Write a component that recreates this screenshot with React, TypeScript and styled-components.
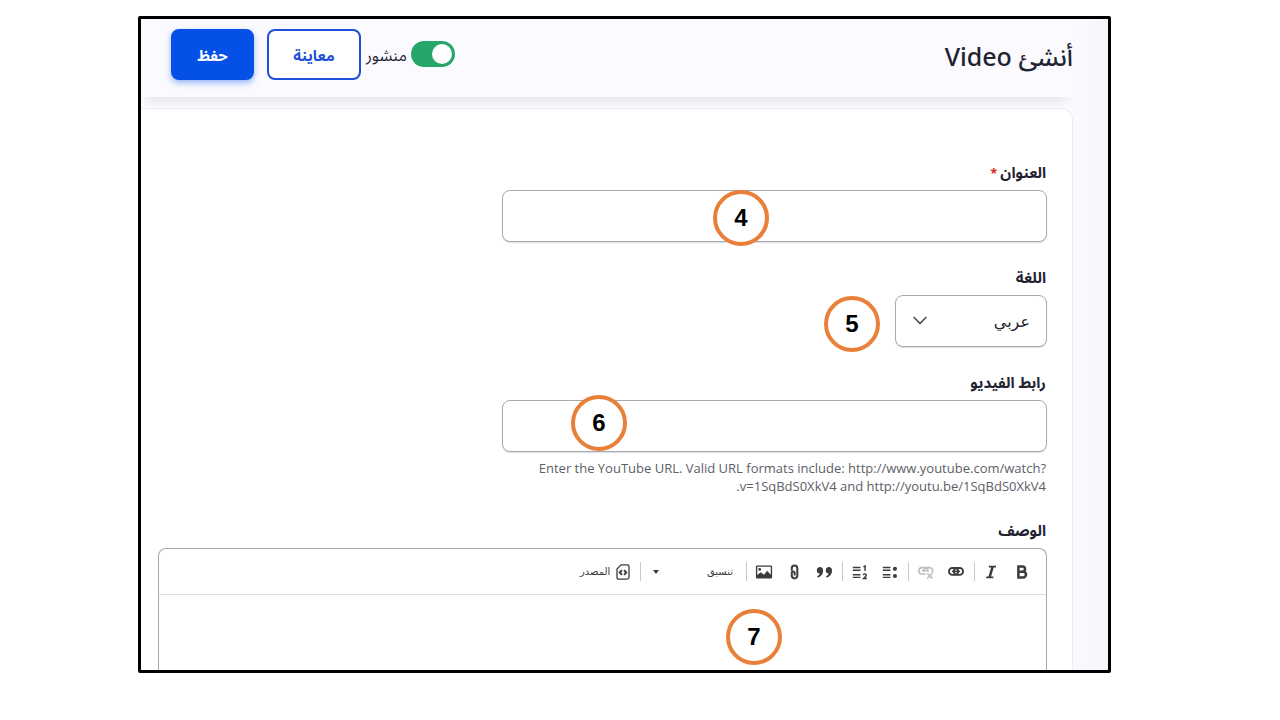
import React from "react";
import styled, { createGlobalStyle, css } from "styled-components";

const GlobalStyle = createGlobalStyle`
  *, *::before, *::after { box-sizing: border-box; }
  body { margin: 0; background: #fff; color: #222330; }
  body, button, input, select, textarea {
    font-family: "Open Sans", "Noto Sans Arabic", sans-serif;
  }
`;

const Page = styled.div`
  padding: 16px 169px 47px 138px;
`;

const Frame = styled.main`
  border: 3px solid #000;
  border-radius: 2px;
  overflow: hidden;
  background: linear-gradient(to left, #f5f5fb, #fafaff 36px);
`;

const Header = styled.header`
  display: flex;
  align-items: center;
  height: 78px;
  margin-right: 35px;
  padding: 0 0 8px 30px;
  box-shadow: 0 10px 10px -6px rgba(34, 35, 48, 0.1);
`;

const Title = styled.h1`
  flex: 1;
  margin: 0;
  padding-top: 4px;
  font-family: "Noto Sans", "Noto Sans Arabic", sans-serif;
  font-size: 25px;
  line-height: 36px;
  font-weight: 500;
`;

const ToggleLabel = styled.label`
  display: flex;
  align-items: center;
  gap: 4px;
  margin-left: 5px;
  font-size: 16px;
`;

const ToggleText = styled.span`
  padding-top: 4px;
`;

const Toggle = styled.input`
  appearance: none;
  position: relative;
  width: 44px;
  height: 26px;
  margin: 0;
  border-radius: 13px;
  background: #26a769;
  &::before {
    content: "";
    position: absolute;
    top: 3px;
    right: 3px;
    width: 20px;
    height: 20px;
    border-radius: 50%;
    background: #fff;
  }
`;

const ActionButton = styled.button<{ $primary?: boolean }>`
  height: 51px;
  min-width: 94px;
  padding: 4px 20px 0;
  border: 2px solid #1d4fd8;
  border-radius: 8px;
  background: #fff;
  color: #1d4fd8;
  font-size: 15px;
  font-weight: 700;
  ${(p) =>
    p.$primary &&
    css`
      min-width: 83px;
      margin-right: 13px;
      border-color: #0550e6;
      background: #0550e6;
      color: #fff;
      box-shadow: 0 3px 6px rgba(5, 80, 230, 0.4);
    `}
`;

const Card = styled.form`
  display: flex;
  flex-direction: column;
  gap: 23px;
  margin: 11px 35px 0 0;
  padding: 51px 25px 0 17px;
  border: 1px solid #ececf2;
  border-width: 1px 1px 0 0;
  border-radius: 0 12px 0 0;
  background: #fff;
  position: relative;
`;

const Field = styled.div`
  display: flex;
  flex-direction: column;
  align-items: flex-start;
`;

const FieldLabel = styled.label`
  margin-bottom: 6px;
  padding-right: 1px;
  font-size: 15px;
  line-height: 24px;
  font-weight: 700;
`;

const Required = styled.span`
  margin-right: 3px;
  color: #dc2323;
  font-size: 13px;
  line-height: 1;
`;

const Control = styled.div<{ $width: string }>`
  position: relative;
  width: ${(p) => p.$width};
  max-width: 100%;
`;

const boxStyle = css`
  display: block;
  width: 100%;
  height: 52px;
  padding: 0 16px;
  border: 1px solid #a9aaaf;
  border-radius: 8px;
  background: #fff;
  color: #222330;
  font-size: 16px;
  box-shadow: 0 1px 1px rgba(34, 35, 48, 0.15);
`;

const TextInput = styled.input`
  ${boxStyle}
`;

const Select = styled.select`
  ${boxStyle}
  appearance: none;
  font-family: "DejaVu Sans", sans-serif;
`;

const Chevron = styled.svg`
  position: absolute;
  left: 18px;
  top: 21px;
  pointer-events: none;
`;

const Help = styled.p`
  width: 545px;
  max-width: 100%;
  margin: 7px 0 0;
  padding-right: 1px;
  color: #5d5e68;
  font-size: 13px;
  line-height: 18px;
`;

const Badge = styled.span<{ $right: number; $top: number }>`
  position: absolute;
  right: ${(p) => p.$right}px;
  top: ${(p) => p.$top}px;
  display: flex;
  align-items: center;
  justify-content: center;
  width: 56px;
  height: 56px;
  border: 4px solid #e8803a;
  border-radius: 50%;
  background: #fff;
  color: #000;
  font: 700 24px "Liberation Sans", sans-serif;
`;

const Editor = styled.div`
  border: 1px solid #a9aaaf;
  border-bottom: 0;
  border-radius: 8px 8px 0 0;
`;

const Toolbar = styled.div`
  display: flex;
  align-items: center;
  height: 46px;
  padding: 0 9px;
  border-bottom: 1px solid #dcdce0;
`;

const ToolButton = styled.button`
  display: flex;
  align-items: center;
  justify-content: center;
  width: 30px;
  height: 30px;
  padding: 0;
  border: 0;
  background: none;
  color: #3c3c3c;
  &:disabled { color: #bdbdbd; }
`;

const WideTool = styled(ToolButton)<{ $width: number; $pad: number }>`
  width: ${(p) => p.$width}px;
  padding: 0 ${(p) => p.$pad}px;
  justify-content: space-between;
  font-family: "DejaVu Sans", sans-serif;
  font-size: 10px;
  white-space: nowrap;
`;

const Separator = styled.span`
  width: 1px;
  height: 19px;
  margin: 0 2px 0 3px;
  background: #c8c8c8;
`;

const EditorBody = styled.textarea`
  display: block;
  width: 100%;
  height: 75px;
  padding: 12px 16px;
  border: 0;
  background: none;
  resize: none;
`;

const ICON = { width: 18, height: 18, viewBox: "0 0 20 20", fill: "currentColor", "aria-hidden": true } as const;

const SMALL_ICON = { ...ICON, width: 16, height: 16 } as const;

const stroke = { fill: "none", stroke: "currentColor" } as const;

const BoldIcon = () => (
  <svg {...ICON}>
    <path {...stroke} strokeWidth="2.8" d="M6 3.900h4.500a2.800 2.800 0 0 1 0 5.700H6zM6 9.600h5.200a3.200 3.200 0 0 1 0 6.500H6z" />
  </svg>
);
const ItalicIcon = () => (
  <svg {...ICON}>
    <path {...stroke} strokeWidth="2" d="M6.500 4h8M3.500 16h8" />
    <path {...stroke} strokeWidth="2.800" d="M10.700 4 7.300 16" />
  </svg>
);
const LinkIcon = () => (
  <svg {...SMALL_ICON}>
    <g {...stroke}>
      <rect x="1.200" y="5" width="11.500" height="8.500" rx="4.200" strokeWidth="2.300" />
      <rect x="7.300" y="5" width="11.500" height="8.500" rx="4.200" strokeWidth="2.300" />
      <path strokeWidth="2" d="M5 9.250h10" />
    </g>
  </svg>
);
const UnlinkIcon = () => (
  <svg {...SMALL_ICON}>
    <g {...stroke} strokeWidth="2">
      <path d="M9.500 12.500H5a4 4 0 0 1 0-8h4a4 4 0 0 1 3.500 2.500" />
      <path d="M7.500 9.500a4 4 0 0 1 3.700-5h3.500a4 4 0 0 1 3 6.300M5 8.500h9" />
      <path d="m11.500 11.500 6.500 6.500m0-6.500L11.500 18" />
    </g>
  </svg>
);
const ListLines = () => (
  <path {...stroke} strokeWidth="1.600" d="M2 5h8.500M2 8h8.500M2 13h8.500M2 16h8.500" />
);
const BulletsIcon = () => (
  <svg {...ICON}>
    <ListLines />
    <circle cx="15.500" cy="6.500" r="2.300" />
    <circle cx="15.500" cy="14.500" r="2.300" />
  </svg>
);
const NumbersIcon = () => (
  <svg {...ICON}>
    <ListLines />
    <path {...stroke} strokeWidth="1.600" d="m13.800 4.300 1.800-1v5.700M13.500 13.500q.3-1.400 1.900-1.400 2.500.6 1 2.600l-2.400 2.500h3.600" />
  </svg>
);
const QuoteIcon = () => (
  <svg {...ICON}>
    <path d="M5 4.500a3.900 3.900 0 0 1 4 4c0 4-2.700 6.800-6.100 7.700l-.5-1.400c1.600-.8 2.700-1.700 2.900-3A3.700 3.700 0 0 1 5 4.500zM14.900 4.500a3.900 3.900 0 0 1 4 4c0 4-2.700 6.800-6.100 7.700l-.5-1.400c1.600-.8 2.700-1.700 2.900-3a3.700 3.700 0 0 1-.3-7.300z" />
  </svg>
);
const ClipIcon = () => (
  <svg {...ICON}>
    <path {...stroke} strokeWidth="2.200" d="M7.500 8.500V6a3 3 0 0 1 6.200 0v8a3 3 0 0 1-6.200 0v-3.500a1.700 1.700 0 0 1 3.200 0V14" />
  </svg>
);
const ImageIcon = () => (
  <svg {...ICON}>
    <path
      fillRule="evenodd"
      d="M2.200 2.800h15.600q1.200 0 1.200 1.200v12q0 1.200-1.200 1.200H2.200Q1 17.200 1 16V4q0-1.200 1.200-1.200zM2.500 4.300v9l4-3 3.500 2.800 3.500-4.600 4 4.500V4.300zM5.200 5.500a1.600 1.600 0 1 1 0 3.200 1.600 1.600 0 0 1 0-3.200z"
    />
  </svg>
);
const SourceIcon = () => (
  <svg width="14" height="16" viewBox="0 0 14 16" aria-hidden="true">
    <path {...stroke} strokeWidth="1.300" d="M5 .9h6.500q1.500 0 1.500 1.500v11.200q0 1.500-1.500 1.500h-9Q1 15.100 1 13.600V5z" />
    <path {...stroke} strokeWidth="2" d="M5.900 6.200 3.800 8.500l2.100 2.300M8.100 6.200l2.100 2.300-2.100 2.300" />
  </svg>
);
const CaretIcon = () => (
  <svg width="6" height="4" viewBox="0 0 6 4" fill="currentColor" aria-hidden="true">
    <path d="M0 0h6L3 4z" />
  </svg>
);

export default function App() {
  return (
    <>
      <GlobalStyle />
      <Page dir="rtl" lang="ar">
        <Frame>
          <Header>
            <Title>أنشئ Video</Title>
            <ToggleLabel>
              <Toggle type="checkbox" defaultChecked />
              <ToggleText>منشور</ToggleText>
            </ToggleLabel>
            <ActionButton type="button">معاينة</ActionButton>
            <ActionButton type="submit" form="video-form" $primary>
              حفظ
            </ActionButton>
          </Header>
          <Card id="video-form" onSubmit={(e) => e.preventDefault()}>
            <Field>
              <FieldLabel htmlFor="title">
                العنوان<Required>*</Required>
              </FieldLabel>
              <Control $width="545px">
                <TextInput id="title" type="text" />
                <Badge $right={278} $top={0}>4</Badge>
              </Control>
            </Field>
            <Field>
              <FieldLabel htmlFor="language">اللغة</FieldLabel>
              <Control $width="152px">
                <Select id="language" defaultValue="ar">
                  <option value="ar">عربي</option>
                </Select>
                <Chevron width="14" height="9" viewBox="0 0 14 9" aria-hidden="true">
                  <path {...stroke} stroke="#4c4d58" strokeWidth="1.600" d="m.7 1 6.300 6.500L13.300 1" />
                </Chevron>
                <Badge $right={167} $top={1}>5</Badge>
              </Control>
            </Field>
            <Field>
              <FieldLabel htmlFor="video-url">رابط الفيديو</FieldLabel>
              <Control $width="545px">
                <TextInput id="video-url" type="text" aria-describedby="video-help" />
                <Badge $right={420} $top={-5}>6</Badge>
              </Control>
              <Help id="video-help">
                Enter the YouTube URL. Valid URL formats include: http://www.youtube.com/watch?v=1SqBdS0XkV4 and
                http://youtu.be/1SqBdS0XkV4.
              </Help>
            </Field>
            <Field>
              <FieldLabel htmlFor="description">الوصف</FieldLabel>
              <Control $width="100%">
                <Editor>
                  <Toolbar role="toolbar">
                    <ToolButton type="button"><BoldIcon /></ToolButton>
                    <ToolButton type="button"><ItalicIcon /></ToolButton>
                    <Separator />
                    <ToolButton type="button"><LinkIcon /></ToolButton>
                    <ToolButton type="button" disabled><UnlinkIcon /></ToolButton>
                    <Separator />
                    <ToolButton type="button"><BulletsIcon /></ToolButton>
                    <ToolButton type="button"><NumbersIcon /></ToolButton>
                    <Separator />
                    <ToolButton type="button"><QuoteIcon /></ToolButton>
                    <ToolButton type="button"><ClipIcon /></ToolButton>
                    <ToolButton type="button"><ImageIcon /></ToolButton>
                    <Separator />
                    <WideTool type="button" $width={100} $pad={10}>
                      تنسيق
                      <CaretIcon />
                    </WideTool>
                    <Separator />
                    <WideTool type="button" $width={64} $pad={7}>
                      <SourceIcon />
                      المصدر
                    </WideTool>
                  </Toolbar>
                  <EditorBody id="description" />
                </Editor>
                <Badge $right={265} $top={61}>7</Badge>
              </Control>
            </Field>
          </Card>
        </Frame>
      </Page>
    </>
  );
}
